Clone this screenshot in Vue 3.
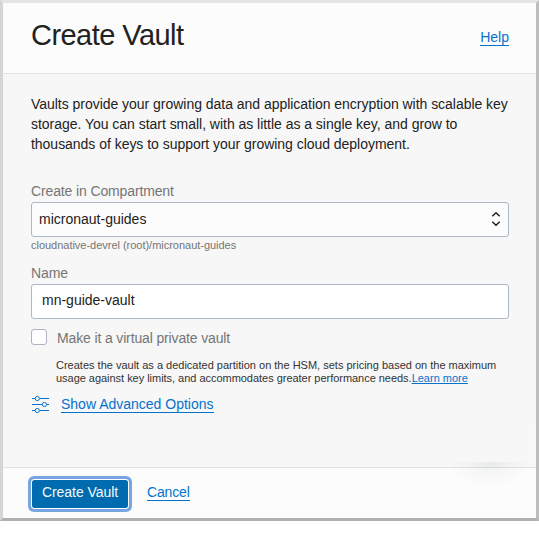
<script setup>
import { ref } from 'vue'

const name = ref('mn-guide-vault')
const isPrivate = ref(false)
</script>

<template>
  <section class="dialog">
    <header class="header">
      <h1>Create Vault</h1>
      <a class="link help">Help</a>
    </header>

    <main class="body">
      <p class="intro">
        <span>Vaults provide your growing data and application encryption with scalable key</span><br />
        <span>storage. You can start small, with as little as a single key, and grow to</span><br />
        <span>thousands of keys to support your growing cloud deployment.</span>
      </p>

      <div class="label">Create in Compartment</div>
      <div class="field select">
        <span>micronaut-guides</span>
        <svg class="chevrons" width="10" height="16" viewBox="0 0 10 16">
          <path d="M1.3 5.2 5 1.7 8.7 5.2M1.3 10.8 5 14.3 8.7 10.8" />
        </svg>
      </div>
      <div class="path">cloudnative-devrel (root)/micronaut-guides</div>

      <label class="label" for="vault-name">Name</label>
      <input id="vault-name" v-model="name" class="field input" type="text" />

      <label class="check">
        <input v-model="isPrivate" type="checkbox" />
        <span>Make it a virtual private vault</span>
      </label>
      <p class="note">
        <span>Creates the vault as a dedicated partition on the HSM, sets pricing based on the maximum</span><br />
        <span class="tight">usage against key limits, and accommodates greater performance needs.</span><a class="learn">Learn more</a>
      </p>

      <div class="advanced">
        <svg width="18" height="18" viewBox="0 0 18 18">
          <path d="M0 3.5H3M8 3.5H17M0 9.5H10M15 9.5H17M0 15.5H3M8 15.5H17" />
          <circle cx="5.3" cy="3.5" r="2.1" />
          <circle cx="12.4" cy="9.5" r="2.1" />
          <circle cx="5.3" cy="15.5" r="2.1" />
        </svg>
        <a class="link">Show Advanced Options</a>
      </div>
    </main>

    <footer class="footer">
      <button class="primary" type="button">Create Vault</button>
      <a class="link cancel">Cancel</a>
    </footer>
    <div class="shade"><i></i></div>
    <div class="edge"></div>
  </section>
</template>

<style>
body {
  background: #fff;
}
</style>

<style scoped>
.dialog {
  position: relative;
  box-sizing: border-box;
  width: 539px;
  height: 521px;
  display: flex;
  flex-direction: column;
  border: 3px solid;
  border-color: #e5e5e5 #bdbdbd #b0b0b0 #d5d5d5;
  background: #f7f7f7;
  color: #222;
  font-family: "Liberation Sans", Arial, sans-serif;
  font-size: 14px;
}
.header {
  box-sizing: border-box;
  height: 71px;
  flex: none;
  display: flex;
  justify-content: space-between;
  padding: 14px 27px 0 28px;
  border-bottom: 1px solid #e3e3e3;
  background: #fcfcfc;
}
h1 {
  margin: 0;
  font-size: 29px;
  font-weight: 400;
  letter-spacing: -0.55px;
  line-height: 36px;
}
.link {
  align-self: flex-start;
  height: 17px;
  border-bottom: 1px solid #0572ce;
  color: #0572ce;
  line-height: 18px;
  white-space: nowrap;
}
.help {
  margin-top: 11px;
}
.body {
  flex: 1;
  display: flex;
  flex-direction: column;
  padding: 20px 27px 0 28px;
}
.intro {
  margin: 0 0 27px;
  letter-spacing: -0.03px;
  line-height: 20px;
  white-space: nowrap;
}
.label {
  height: 21px;
  color: #757575;
  letter-spacing: -0.13px;
  line-height: 20px;
}
.field {
  box-sizing: border-box;
  width: 478px;
  height: 35px;
  border: 1px solid #aeb8c4;
  border-radius: 3px;
}
.select {
  display: flex;
  align-items: center;
  justify-content: space-between;
  padding: 0 7px;
  background: #fcfcfc;
}
.select span {
  padding-bottom: 2px;
}
.chevrons {
  margin-bottom: 1px;
}
.chevrons path {
  fill: none;
  stroke: #202020;
  stroke-width: 1.5;
}
.path {
  height: 26px;
  color: #757575;
  font-size: 11px;
  letter-spacing: -0.02px;
  line-height: 17px;
}
.input {
  margin: 0;
  padding: 0 10px 3px;
  background: #fff;
  color: #222;
  font: inherit;
  outline: none;
}
.check {
  display: flex;
  margin-top: 10px;
  height: 20px;
  color: #757575;
  letter-spacing: -0.14px;
  line-height: 19px;
}
.check input {
  appearance: none;
  box-sizing: border-box;
  width: 16px;
  height: 16px;
  margin: 0 10px 0 0;
  border: 1px solid #aeb3bd;
  border-radius: 3px;
  background: #fff;
}
.note {
  margin: 10px 0 0 25px;
  color: #333;
  font-size: 11px;
  line-height: 13px;
  white-space: nowrap;
}
.tight {
  letter-spacing: -0.03px;
}
.learn {
  color: #0572ce;
  text-decoration: underline;
}
.advanced {
  display: flex;
  gap: 11px;
  margin-top: 10px;
  padding-left: 1px;
}
.advanced svg {
  flex: none;
  fill: none;
  stroke: #0572ce;
  stroke-width: 1;
}
.footer {
  box-sizing: border-box;
  height: 51px;
  flex: none;
  display: flex;
  padding: 11px 28px;
  border-top: 1px solid #e3e3e3;
  background: #fcfcfc;
}
.primary {
  box-sizing: border-box;
  width: 98px;
  height: 30px;
  margin: 0;
  padding: 0 0 4px;
  border: 1px solid #fff;
  border-radius: 3px;
  background: #006bae;
  background-clip: padding-box;
  box-shadow: 0 0 0 3px #76a6e2;
  color: #f4f8fb;
  font: inherit;
  letter-spacing: -0.05px;
  white-space: nowrap;
}
.cancel {
  margin: 4px 0 0 18px;
  letter-spacing: -0.15px;
}
.shade {
  position: absolute;
  right: 3px;
  top: 459px;
  width: 85px;
  height: 26px;
  overflow: hidden;
}
.shade i {
  position: absolute;
  inset: -24px 0 0;
  background: radial-gradient(ellipse closest-side, rgba(60, 80, 80, 0.08), rgba(60, 80, 80, 0.03) 45%, transparent);
}
.edge {
  position: absolute;
  right: 3px;
  top: 423px;
  width: 5px;
  height: 36px;
  background: #f8f8f8;
}
</style>
